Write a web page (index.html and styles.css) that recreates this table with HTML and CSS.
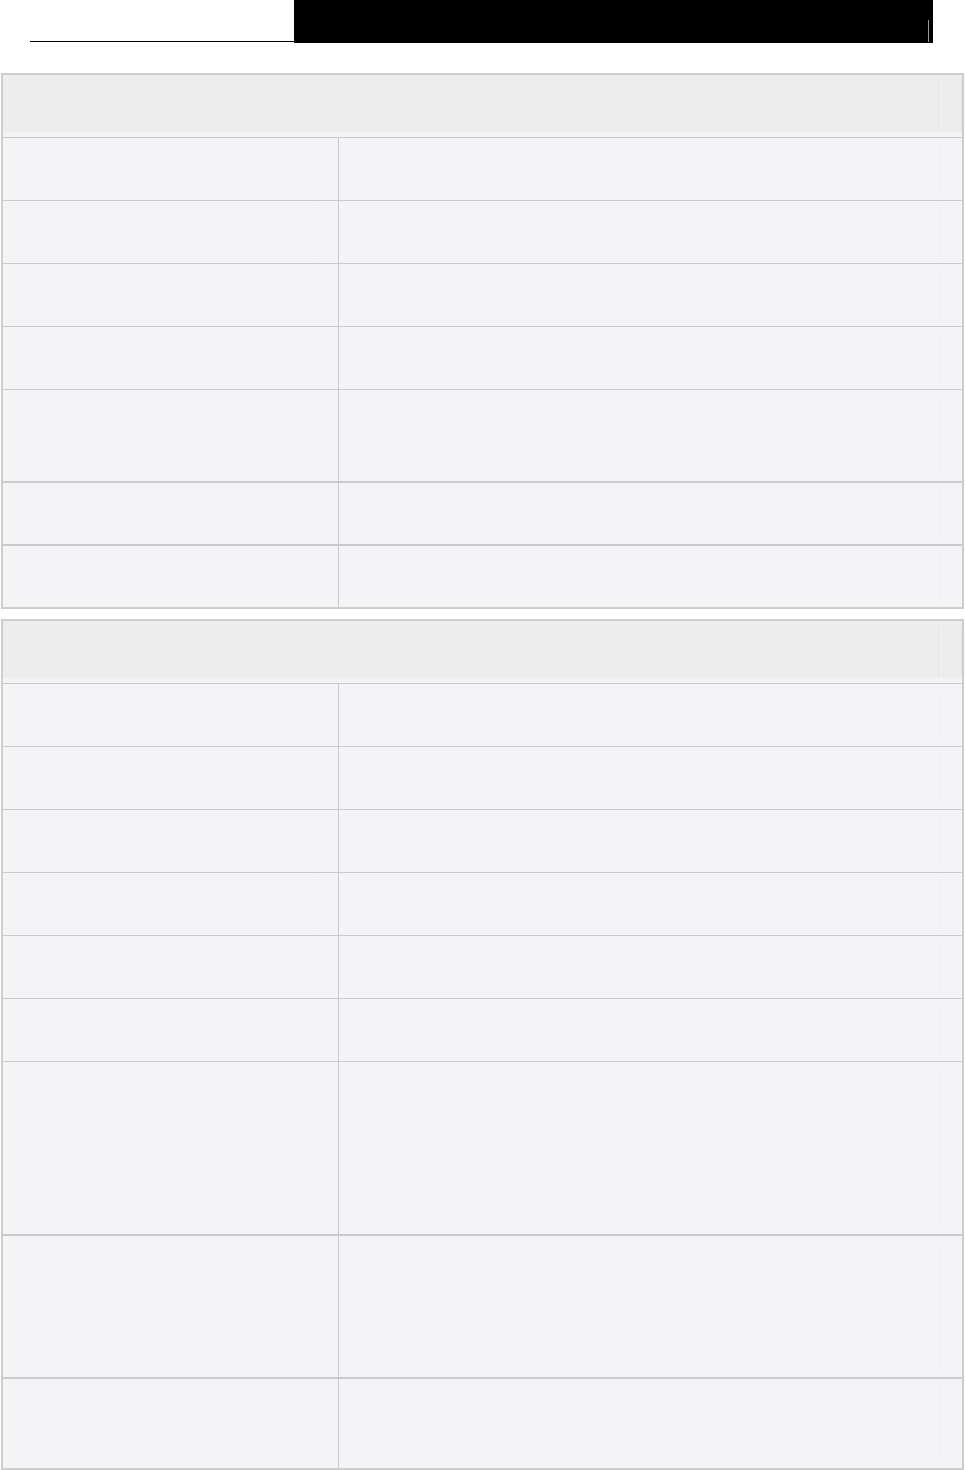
FILE: index.html
```html
<!DOCTYPE html>
<html lang="en">
<head>
  <meta charset="UTF-8" />
  <meta name="viewport" content="width=device-width, initial-scale=1.0"/>
  <title>Settings Table</title>
<link rel="stylesheet" href="styles.css">
</head>
<body>
  <div class="page-head">
    <div class="head-rule"></div>
    <div class="head-bar"><span class="head-tick"></span></div>
  </div>

  <div class="sheet">
    <div class="sheet-title"><div class="cell-inner"></div></div>
    <div class="row"><div class="key"><div class="cell-inner"></div></div><div class="val"><div class="cell-inner"></div></div></div>
    <div class="row"><div class="key"><div class="cell-inner"></div></div><div class="val"><div class="cell-inner"></div></div></div>
    <div class="row"><div class="key"><div class="cell-inner"></div></div><div class="val"><div class="cell-inner"></div></div></div>
    <div class="row"><div class="key"><div class="cell-inner"></div></div><div class="val"><div class="cell-inner"></div></div></div>
    <div class="row h92"><div class="key"><div class="cell-inner boxed"></div></div><div class="val"><div class="cell-inner"></div></div></div>
    <div class="row thick"><div class="key"><div class="cell-inner"></div></div><div class="val"><div class="cell-inner"></div></div></div>
    <div class="row thick"><div class="key"><div class="cell-inner"></div></div><div class="val"><div class="cell-inner"></div></div></div>
  </div>

  <div class="sheet">
    <div class="sheet-title"><div class="cell-inner"></div></div>
    <div class="row"><div class="key"><div class="cell-inner"></div></div><div class="val"><div class="cell-inner"></div></div></div>
    <div class="row"><div class="key"><div class="cell-inner"></div></div><div class="val"><div class="cell-inner"></div></div></div>
    <div class="row"><div class="key"><div class="cell-inner"></div></div><div class="val"><div class="cell-inner"></div></div></div>
    <div class="row"><div class="key"><div class="cell-inner"></div></div><div class="val"><div class="cell-inner"></div></div></div>
    <div class="row"><div class="key"><div class="cell-inner"></div></div><div class="val"><div class="cell-inner"></div></div></div>
    <div class="row"><div class="key"><div class="cell-inner"></div></div><div class="val"><div class="cell-inner"></div></div></div>
    <div class="row h173"><div class="key"><div class="cell-inner boxed"></div></div><div class="val"><div class="cell-inner"></div></div></div>
    <div class="row thick h143"><div class="key"><div class="cell-inner boxed"></div></div><div class="val"><div class="cell-inner"></div></div></div>
    <div class="row thick h91"><div class="key"><div class="cell-inner"></div></div><div class="val"><div class="cell-inner"></div></div></div>
  </div>
</body>
</html>
```

FILE: styles.css
```css
body {
  font-family: "Liberation Sans", Arial, sans-serif;
  margin: 0;
  padding: 0;
  background: #fff;
}
.page-head {
  display: flex;
  margin-left: 30px;
  width: 903px;
  height: 43px;
  margin-bottom: 30px;
}
.head-rule {
  width: 264px;
  border-bottom: 1px solid #000;
  height: 41px;
}
.head-bar {
  flex: 1;
  background: #000;
  display: flex;
  justify-content: flex-end;
  align-items: flex-end;
  padding-right: 4px;
}
.head-tick {
  display: block;
  width: 1px;
  height: 22px;
  margin-bottom: 1px;
  background: #9a9a9a;
}
.sheet {
  margin: 0 1px 10px 1px;
  border: 2px solid #cdcdcd;
  background: #f4f4f6;
}
.sheet-title {
  height: 62px;
  background: #ededed;
  border-bottom: 5px solid #f3f3f5;
  padding: 5px 0 0 0;
  box-sizing: border-box;
  display: flex;
  justify-content: flex-end;
}
.sheet-title .cell-inner {
  width: 24px;
  border-left: 1px solid #e6e6e6;
  border-right: 1px solid #e6e6e6;
}
.row {
  display: grid;
  grid-template-columns: 336px 1fr;
  height: 63px;
  border-top: 1px solid #cacacc;
  box-sizing: border-box;
}
.row.thick {
  border-top: 2px solid #cacacc;
}
.row.h92 { height: 92px; }
.row.h173 { height: 173px; }
.row.h143 { height: 143px; }
.row.h91 { height: 91px; }
.key {
  border-right: 1px solid #c8c8ca;
  padding: 6px 23px 6px 24px;
  display: flex;
  align-items: center;
}
.val {
  padding: 6px 22px 6px 24px;
  display: flex;
  align-items: center;
}
.cell-inner {
  width: 100%;
  height: 100%;
  border-right: 1px solid #f0f0f2;
  box-sizing: border-box;
}
.cell-inner.boxed {
  height: 53px;
  border-top: 1px solid #f1f1f3;
  border-bottom: 1px solid #f1f1f3;
}
```
